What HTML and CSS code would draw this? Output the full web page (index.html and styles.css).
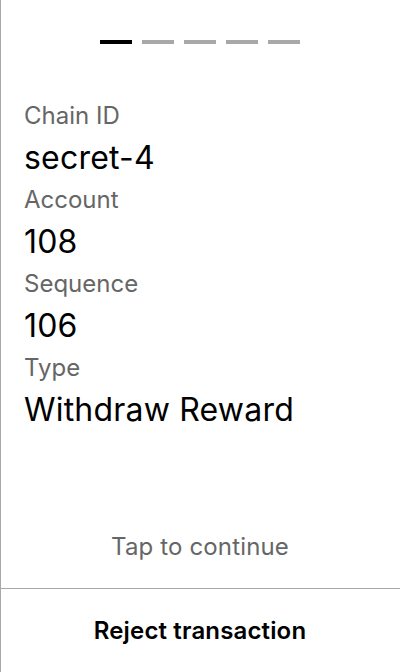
FILE: index.html
```html
<!DOCTYPE html>
<html>
<head>
<meta charset="utf-8">
<link rel="stylesheet" href="styles.css">
</head>
<body>
<div class="screen">
  <main class="content">
    <div class="steps">
      <span class="step active"></span>
      <span class="step"></span>
      <span class="step"></span>
      <span class="step"></span>
      <span class="step"></span>
    </div>
    <dl class="fields">
      <dt class="label">Chain ID</dt>
      <dd class="value">secret-4</dd>
      <dt class="label">Account</dt>
      <dd class="value">108</dd>
      <dt class="label">Sequence</dt>
      <dd class="value">106</dd>
      <dt class="label">Type</dt>
      <dd class="value">Withdraw Reward</dd>
    </dl>
    <p class="hint">Tap to continue</p>
  </main>
  <footer class="footer">
    <button class="reject">Reject transaction</button>
  </footer>
</div>
</body>
</html>
```

FILE: styles.css
```css
html, body {
  margin: 0;
  padding: 0;
  background: #fff;
}
body {
  font-family: Inter, "Noto Sans", sans-serif;
  color: #000;
}
.screen {
  height: 672px;
  width: 400px;
  box-sizing: border-box;
  border-left: 1px solid #a8a8a8;
  display: flex;
  flex-direction: column;
}
.content {
  flex: 1;
  display: flex;
  flex-direction: column;
  padding: 40px 23px 0 23px;
}
.steps {
  display: flex;
  justify-content: center;
  gap: 10px;
  margin-left: -1px;
}
.step {
  width: 32px;
  height: 4px;
  background: #a8a8a8;
}
.step.active {
  background: #000;
}
.fields {
  margin: 51px 0 0 0;
  padding: 0;
}
.label {
  font-size: 24px;
  line-height: 42px;
  color: #666;
}
.value {
  margin: 0;
  font-size: 32px;
  letter-spacing: 0.2px;
  line-height: 42px;
  color: #000;
}
.hint {
  margin: auto 0 20px 0;
  text-align: center;
  font-size: 24px;
  letter-spacing: 0.15px;
  line-height: 42px;
  color: #666;
  margin-left: -1px;
}
.footer {
  height: 84px;
  box-sizing: border-box;
  border-top: 1px solid #a8a8a8;
  display: flex;
}
.reject {
  flex: 1;
  border: 0;
  background: transparent;
  font-family: inherit;
  font-size: 24px;
  letter-spacing: 0.15px;
  font-weight: 600;
  color: #000;
  padding: 0;
  margin-left: -1px;
}
```
